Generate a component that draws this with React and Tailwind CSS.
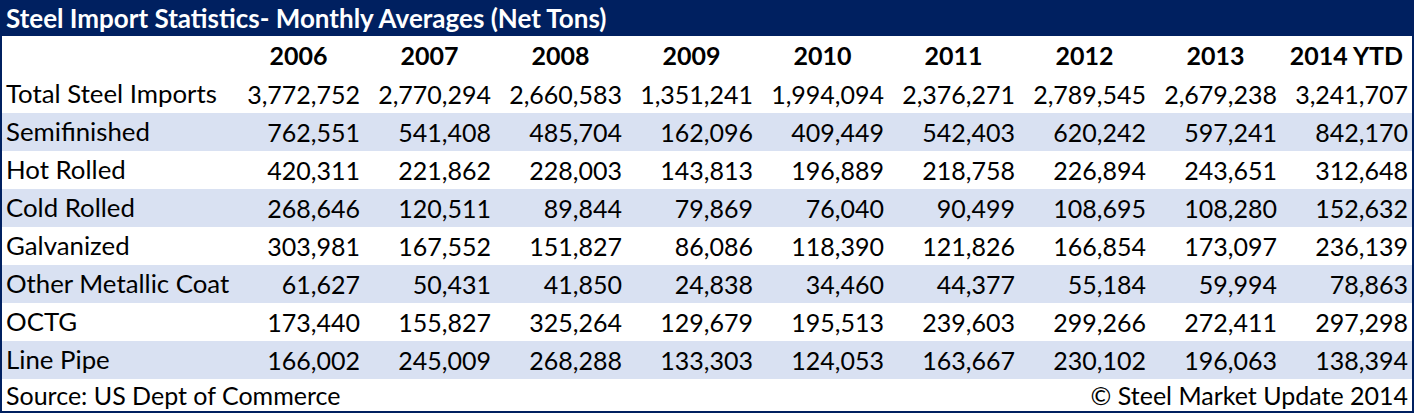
import React from "react";

const years = ["2006", "2007", "2008", "2009", "2010", "2011", "2012", "2013", "2014 YTD"];

const rows = [
  { name: "Total Steel Imports", values: ["3,772,752", "2,770,294", "2,660,583", "1,351,241", "1,994,094", "2,376,271", "2,789,545", "2,679,238", "3,241,707"] },
  { name: "Semifinished", values: ["762,551", "541,408", "485,704", "162,096", "409,449", "542,403", "620,242", "597,241", "842,170"] },
  { name: "Hot Rolled", values: ["420,311", "221,862", "228,003", "143,813", "196,889", "218,758", "226,894", "243,651", "312,648"] },
  { name: "Cold Rolled", values: ["268,646", "120,511", "89,844", "79,869", "76,040", "90,499", "108,695", "108,280", "152,632"] },
  { name: "Galvanized", values: ["303,981", "167,552", "151,827", "86,086", "118,390", "121,826", "166,854", "173,097", "236,139"] },
  { name: "Other Metallic Coat", values: ["61,627", "50,431", "41,850", "24,838", "34,460", "44,377", "55,184", "59,994", "78,863"] },
  { name: "OCTG", values: ["173,440", "155,827", "325,264", "129,679", "195,513", "239,603", "299,266", "272,411", "297,298"] },
  { name: "Line Pipe", values: ["166,002", "245,009", "268,288", "133,303", "124,053", "163,667", "230,102", "196,063", "138,394"] },
];

const grid = "grid grid-cols-[231px_repeat(9,131px)]";

export default function App() {
  return (
    <div className="w-[1414px] h-[413px] bg-white text-black font-['Lato',sans-serif] text-[25px] leading-none">
      {/* Title bar */}
      <div className="h-[36px] bg-[#002060] text-white font-bold text-[26px] flex items-center px-[6px]">
        Steel Import Statistics- Monthly Averages (Net Tons)
      </div>

      <div className="border-x-2 border-b-2 border-[#002060]">
        {/* Year header */}
        <div className={`${grid} h-[39px] items-center font-bold`}>
          <div />
          {years.map((y) => (
            <div key={y} className="text-center">{y}</div>
          ))}
        </div>

        {rows.map((r, i) => (
          <div
            key={r.name}
            className={`${grid} h-[38px] items-center ${i % 2 === 1 ? "bg-[#d9e1f2]" : ""}`}
          >
            <div className="pl-[4px] whitespace-nowrap text-[25.8px]">{r.name}</div>
            {r.values.map((v, j) => (
              <div key={j} className="text-right pr-[4px]">{v}</div>
            ))}
          </div>
        ))}

        {/* Footer */}
        <div className="h-[32px] flex items-center justify-between px-[4px]">
          <span>Source: US Dept of Commerce</span>
          <span>© Steel Market Update 2014</span>
        </div>
      </div>
    </div>
  );
}
